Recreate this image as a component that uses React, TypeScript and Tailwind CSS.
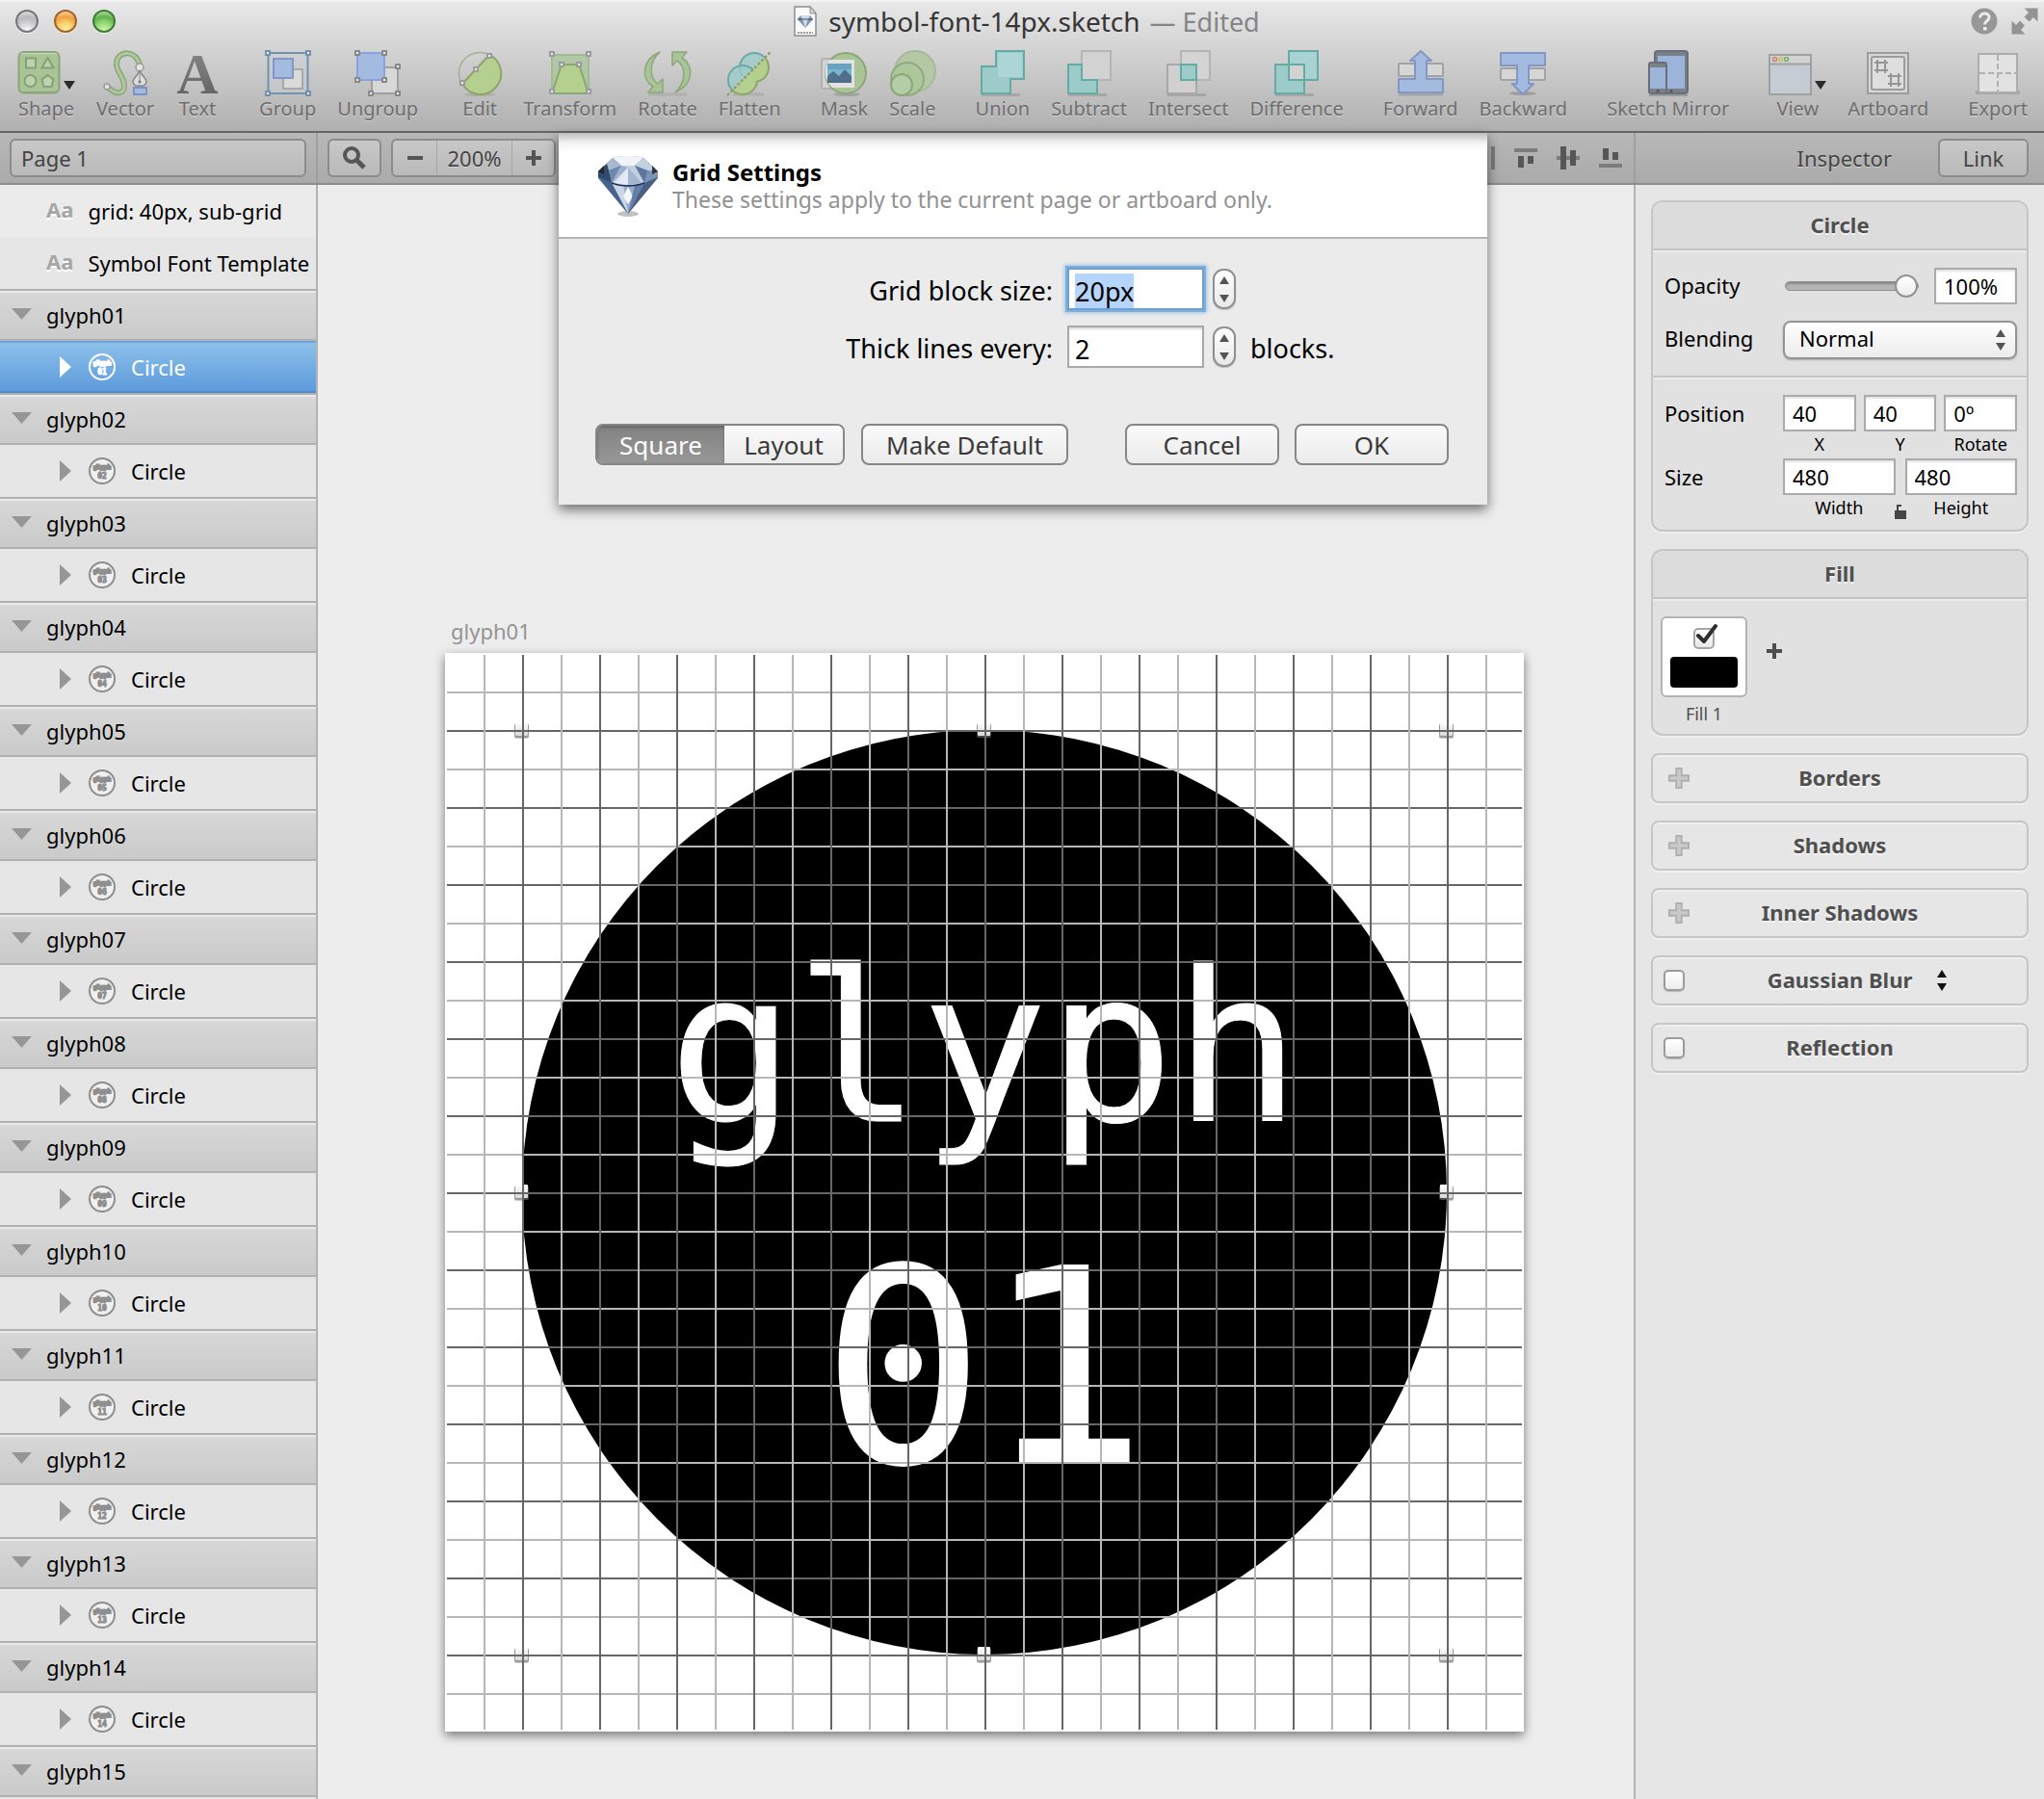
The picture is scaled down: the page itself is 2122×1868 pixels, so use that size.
import { useEffect, useRef } from "react";
import type { ReactNode } from "react";

/* ---------- toolbar icons ---------- */

const GREEN = "#a9c598";
const GREEN_LINE = "#8ba678";
const LIME = "#b5d08e";
const TEAL = "#9dcbca";
const TEAL_LINE = "#66aaa4";
const BLUE = "#a3bbdf";
const BLUE_LINE = "#8496c6";
const NODE = "#9c9ca0";

function Icon({ w, children }: { w: number; children: ReactNode }) {
  return (
    <svg width={w} height={48} viewBox={`0 0 ${w} 48`} fill="none" aria-hidden="true" className="overflow-visible">
      {children}
    </svg>
  );
}

function Nodes({ at, color = NODE }: { at: [number, number][]; color?: string }) {
  return (
    <>
      {at.map(([x, y]) => (
        <rect key={`${x}-${y}`} x={x - 2} y={y - 2} width={4} height={4} fill="#eee" stroke={color} strokeWidth={2} />
      ))}
    </>
  );
}

function Caret() {
  return (
    <svg width={12} height={48} viewBox="0 0 12 48" aria-hidden="true">
      <path d="M0 32h12l-6 9z" fill="#2b2b2b" />
    </svg>
  );
}

const ShapeIcon = (
  <Icon w={45}>
    <rect x="1" y="3" width="43" height="43" rx="6" fill="#8f9c88" opacity=".5" />
    <rect x="1.5" y="2" width="42" height="42" rx="5" fill={GREEN} stroke={GREEN_LINE} strokeWidth="2" />
    <path d="M4 3.500h37" stroke="#c9dcbd" />
    <g stroke="#86a073" strokeWidth="2" fill="#bdd2b0">
      <rect x="9" y="8.500" width="10" height="10" />
      <path d="M31.500 8l6 10.500h-12z" />
      <circle cx="13.500" cy="32" r="6" />
      <path d="M31.500 26l6 4.500-2 7.500h-8l-2-7.500z" />
    </g>
  </Icon>
);

const VectorIcon = (
  <Icon w={46}>
    <path d="M4 38c10 9 17 8 18 0 1-9-9-16-8-25C15 0 36-1 38 17" stroke="#8ba678" strokeWidth="6" />
    <path d="M4 38c10 9 17 8 18 0 1-9-9-16-8-25C15 0 36-1 38 17" stroke="#aeca9c" strokeWidth="3" />
    <circle cx="4" cy="38" r="3" fill="#e4e4e4" stroke="#999" strokeWidth="1.500" />
    <circle cx="38" cy="18" r="4" fill="#e4e4e4" stroke="#999" strokeWidth="1.500" />
    <path d="M38 21c1 5 7 8 7 12 0 2-2 3-3 4h-8c-1-1-3-2-3-4 0-4 6-7 7-12z" fill="#ddd" stroke="#878787" strokeWidth="1.500" />
    <path d="M38 24v9" stroke="#878787" />
    <circle cx="38" cy="33" r="1.500" fill="#777" />
    <rect x="32" y="39" width="13" height="7" fill={BLUE} stroke="#7d92c0" strokeWidth="2" />
  </Icon>
);

const TextIcon = (
  <Icon w={46}>
    <defs>
      <linearGradient id="ink" x1="0" y1="0" x2="0" y2="1">
        <stop offset="0" stopColor="#8c8c8c" />
        <stop offset="1" stopColor="#5c5c5c" />
      </linearGradient>
    </defs>
    <text x="23" y="45" textAnchor="middle" fill="url(#ink)" className="font-['Liberation_Serif',serif] text-[60px] font-bold">
      A
    </text>
  </Icon>
);

const GroupIcon = (
  <Icon w={48}>
    <rect x="3.500" y="3" width="41" height="42" stroke="#7491ad" strokeWidth="2" fill="#c9cfd6" fillOpacity=".4" />
    <rect x="19" y="20" width="20" height="20" fill="#dadada" stroke="#a8a8a8" strokeWidth="2" />
    <rect x="9" y="9" width="20" height="20" fill={BLUE} stroke={BLUE_LINE} strokeWidth="2" />
    <Nodes color="#7491ad" at={[[3, 3], [45, 3], [3, 45], [45, 45]]} />
  </Icon>
);

const UngroupIcon = (
  <Icon w={48}>
    <rect x="18" y="18" width="27" height="27" fill="#d8d8d8" stroke="#a0a0a0" strokeWidth="2" />
    <rect x="3" y="3" width="28" height="28" fill={BLUE} stroke="#8aa0e0" strokeWidth="2" />
    <Nodes color="#8a8a8a" at={[[3, 3], [31, 3], [3, 31], [31, 31], [45, 17], [17, 45], [45, 45]]} />
  </Icon>
);

const EditIcon = (
  <Icon w={46}>
    <ellipse cx="23" cy="46" rx="16" ry="2" fill="#999" opacity=".5" />
    <circle cx="23" cy="24" r="21.500" stroke="#a2b196" strokeWidth="1.500" />
    <path d="M5 35L33 5a21.500 21.500 0 1 1-28 30z" fill={LIME} stroke="#8ea568" strokeWidth="2" />
    <Nodes at={[[5, 34], [19, 20], [33, 6]]} />
  </Icon>
);

const TransformIcon = (
  <Icon w={44}>
    <rect x="3" y="5" width="38" height="40" fill={GREEN} fillOpacity=".8" stroke="#a3ba96" strokeWidth="2" />
    <path d="M13 15h18l10 30H3z" fill={LIME} stroke={GREEN_LINE} strokeWidth="2" />
    <Nodes at={[[3, 4], [41, 4], [13, 15], [31, 15], [3, 43], [41, 43]]} />
  </Icon>
);

const RotateIcon = (
  <Icon w={46}>
    <path d="M3 46h40" stroke="#999" strokeWidth="3" opacity=".4" />
    <g fill={GREEN} stroke={GREEN_LINE} strokeWidth="1.500" strokeLinejoin="round">
      <path d="M15 2C-4 10-5 30 8 38l-5 6h15V30l-5 5C3 28 4 12 15 2z" />
      <path d="M31 44c19-8 20-28 7-36l5-6H28v14l5-5c10 7 9 23-2 33z" />
    </g>
  </Icon>
);

const FlattenIcon = (
  <Icon w={46}>
    <defs>
      <clipPath id="upper-half">
        <path d="M0 47L45 2V0H0z" />
      </clipPath>
      <clipPath id="lower-half">
        <path d="M0 47L45 2v46H0z" />
      </clipPath>
    </defs>
    <path d="M6 46h32" stroke="#999" strokeWidth="3" opacity=".4" />
    <g clipPath="url(#upper-half)" fill={TEAL} fillOpacity=".8" stroke={TEAL_LINE} strokeWidth="2">
      <circle cx="28" cy="18" r="15" />
      <circle cx="16" cy="31" r="15" />
    </g>
    <g clipPath="url(#lower-half)">
      <g stroke="#8ea568" strokeWidth="4">
        <circle cx="28" cy="18" r="14" />
        <circle cx="16" cy="31" r="14" />
      </g>
      <g fill={LIME}>
        <circle cx="28" cy="18" r="14" />
        <circle cx="16" cy="31" r="14" />
      </g>
    </g>
    <path d="M0 47L45 2" stroke="#8b9a66" strokeWidth="2" strokeDasharray="3 2" />
  </Icon>
);

const MaskIcon = (
  <Icon w={48}>
    <ellipse cx="27" cy="46" rx="14" ry="2" fill="#888" opacity=".5" />
    <rect x="1" y="9" width="35" height="31" rx="2" stroke="#b2b2b2" strokeWidth="2" fill="#d4d4d4" />
    <circle cx="26" cy="24" r="21" fill={GREEN} stroke={GREEN_LINE} strokeWidth="2" />
    <path d="M9 10h26v29H12A21 21 0 0 1 9 10z" fill="#e2e2e2" />
    <rect x="7" y="14" width="25" height="20" fill="#6aa3c2" />
    <path d="M7 20h25v8H7z" fill="#83bad2" opacity=".7" />
    <path d="M7 34v-7l6-5 6 5 6-7 7 7v7z" fill="#4f6f8a" />
  </Icon>
);

const ScaleIcon = (
  <Icon w={48}>
    <circle cx="27" cy="22" r="21" fill="#b4c8a6" stroke="#a5b898" strokeWidth="2" />
    <circle cx="19" cy="30" r="17" fill="#adc79d" stroke="#92aa82" strokeWidth="2" />
    <circle cx="13" cy="36" r="11" fill="#b5cda6" stroke={GREEN_LINE} strokeWidth="2" />
  </Icon>
);

const SquareShadow = <path d="M1 46.500h40" stroke="#888" strokeWidth="3" opacity=".45" />;

const UnionIcon = (
  <Icon w={46}>
    {SquareShadow}
    <path d="M16 1h29v29H31v15H1V17h15z" fill={TEAL} stroke={TEAL_LINE} strokeWidth="2" />
    <path d="M18 3h25v25H18z" fill="#add5d5" />
  </Icon>
);

const SubtractIcon = (
  <Icon w={46}>
    {SquareShadow}
    <rect x="15" y="1" width="30" height="30" fill="#d2d2d2" stroke="#b4b4b4" strokeWidth="2" />
    <path d="M1 15h14v16h16v14H1z" fill={TEAL} stroke={TEAL_LINE} strokeWidth="2" />
  </Icon>
);

const IntersectIcon = (
  <Icon w={46}>
    {SquareShadow}
    <rect x="15" y="1" width="30" height="30" fill="#d4d4d4" stroke="#b4b4b4" strokeWidth="2" />
    <rect x="1" y="15" width="30" height="30" fill="#d0d0d0" stroke="#a8a8a8" strokeWidth="2" />
    <rect x="15" y="15" width="16" height="16" fill={TEAL} stroke={TEAL_LINE} strokeWidth="2" />
  </Icon>
);

const DifferenceIcon = (
  <Icon w={46}>
    {SquareShadow}
    <rect x="15" y="1" width="30" height="30" fill="#a9d3d3" stroke={TEAL_LINE} strokeWidth="2" />
    <rect x="1" y="15" width="30" height="30" fill={TEAL} stroke={TEAL_LINE} strokeWidth="2" />
    <rect x="15" y="15" width="16" height="16" fill="#d2d2d2" stroke={TEAL_LINE} strokeWidth="2" />
  </Icon>
);

const ForwardIcon = (
  <Icon w={48}>
    <path d="M1 46h46" stroke="#888" strokeWidth="3" opacity=".5" />
    <rect x="1" y="14" width="46" height="13" rx="1" fill="#d6d6d6" stroke="#a2a2a2" strokeWidth="2" />
    <path d="M24 1l11 10h-5v19h17v14H1V30h17V11h-5z" fill={BLUE} stroke={BLUE_LINE} strokeWidth="2" strokeLinejoin="round" />
  </Icon>
);

const BackwardIcon = (
  <Icon w={48}>
    <ellipse cx="24" cy="45" rx="14" ry="2" fill="#888" opacity=".6" />
    <rect x="1" y="19" width="46" height="12" rx="1" fill="#d6d6d6" stroke="#a2a2a2" strokeWidth="2" />
    <path d="M1 3h46v13H30v19h5L24 46 13 35h5V16H1z" fill={BLUE} stroke={BLUE_LINE} strokeWidth="2" strokeLinejoin="round" />
  </Icon>
);

const MirrorIcon = (
  <Icon w={42}>
    <path d="M1 47h40" stroke="#777" strokeWidth="2" opacity=".5" />
    <rect x="7" y="1" width="34" height="44" rx="3" fill="#7b7f88" stroke="#6a6e76" strokeWidth="2" />
    <rect x="10" y="6" width="28" height="34" fill="#9db4da" />
    <rect x="1" y="13" width="18" height="32" rx="2" fill="#7b7f88" stroke="#6a6e76" strokeWidth="2" />
    <rect x="2" y="18" width="16" height="22" fill="#9db4da" />
    <circle cx="10" cy="42.500" r="1.500" fill="#50545c" />
    <circle cx="24" cy="42.500" r="1.500" fill="#50545c" />
  </Icon>
);

const ViewIcon = (
  <Icon w={45}>
    <rect x="1" y="5" width="43" height="41" fill="#c4ccd4" stroke="#a0a0a0" strokeWidth="2" />
    <path d="M2 6h41v8H2z" fill="#d2d2d2" />
    <path d="M2 14.500h41" stroke="#a0a0a0" strokeWidth="2" />
    <circle cx="6.500" cy="9.500" r="2" stroke="#cf7f86" strokeWidth="1.500" />
    <circle cx="12.500" cy="9.500" r="2" stroke="#d3bd5f" strokeWidth="1.500" />
    <circle cx="18.500" cy="9.500" r="2" stroke="#6fb566" strokeWidth="1.500" />
  </Icon>
);

const ArtboardIcon = (
  <Icon w={44}>
    <rect x="1" y="3" width="42" height="42" fill="#d6d6d6" stroke="#9c9c9c" strokeWidth="2" />
    <rect x="5" y="7" width="34" height="34" rx="2" fill="#dedede" stroke="#9c9c9c" strokeWidth="2" />
    <path
      d="M11 10v14M19 10v14M8 13h14M8 21h14M25 24v14M33 24v14M22 27h14M22 35h14"
      stroke="#969696"
      strokeWidth="2"
    />
  </Icon>
);

const ExportIcon = (
  <Icon w={46}>
    <path d="M0 42h2v3h42v-3h2v4H0z" fill="#a6a6a6" />
    <rect x="3" y="4" width="40" height="40" fill="#e2e2e2" stroke="#adadad" strokeWidth="2" />
    <path d="M23 5v38M4 24h38" stroke="#b0b0b0" strokeWidth="2" strokeDasharray="6 3" />
  </Icon>
);

type Tool = { label: string; icon: ReactNode; menu?: boolean };

const toolGroups: Tool[][] = [
  [
    { label: "Shape", icon: ShapeIcon, menu: true },
    { label: "Vector", icon: VectorIcon },
    { label: "Text", icon: TextIcon },
  ],
  [
    { label: "Group", icon: GroupIcon },
    { label: "Ungroup", icon: UngroupIcon },
  ],
  [
    { label: "Edit", icon: EditIcon },
    { label: "Transform", icon: TransformIcon },
    { label: "Rotate", icon: RotateIcon },
    { label: "Flatten", icon: FlattenIcon },
  ],
  [
    { label: "Mask", icon: MaskIcon },
    { label: "Scale", icon: ScaleIcon },
  ],
  [
    { label: "Union", icon: UnionIcon },
    { label: "Subtract", icon: SubtractIcon },
    { label: "Intersect", icon: IntersectIcon },
    { label: "Difference", icon: DifferenceIcon },
  ],
  [
    { label: "Forward", icon: ForwardIcon },
    { label: "Backward", icon: BackwardIcon },
  ],
  [{ label: "Sketch Mirror", icon: MirrorIcon }],
  [
    { label: "View", icon: ViewIcon, menu: true },
    { label: "Artboard", icon: ArtboardIcon },
  ],
  [{ label: "Export", icon: ExportIcon }],
];

function TitleBar() {
  return (
    <div className="grid h-11 grid-cols-[1fr_auto_1fr] items-center pr-1.5 pl-4">
      <div className="flex gap-4">
        <button
          aria-label="Close"
          className="size-6 rounded-full border-2 border-[#77777a] bg-[radial-gradient(circle_at_50%_100%,#ffffff_0%,#c9c9cb_45%,#b9b9bb_65%,#ededed_100%)] shadow-[0_1px_0_#f4f4f4]"
        />
        <button
          aria-label="Minimize"
          className="size-6 rounded-full border-2 border-[#a5622a] bg-[radial-gradient(circle_at_50%_100%,#fdf3a4_0%,#f8cf6a_40%,#efa03f_65%,#fbe3c0_100%)] shadow-[0_1px_0_#f4f4f4]"
        />
        <button
          aria-label="Zoom"
          className="size-6 rounded-full border-2 border-[#3f7a35] bg-[radial-gradient(circle_at_50%_100%,#d8f6b0_0%,#93d877_40%,#5fb14c_65%,#d3efca_100%)] shadow-[0_1px_0_#f4f4f4]"
        />
      </div>
      <h1 className="flex items-center gap-3 leading-none">
        <svg width={24} height={32} viewBox="0 0 24 32" aria-hidden="true">
          <path d="M1 1h16l6 7v23H1z" fill="#fafafa" stroke="#8d8d8d" strokeWidth="1.500" />
          <path d="M17 1v7h6z" fill="#d8d8d8" stroke="#8d8d8d" />
          <path d="M7 10h10l3 4-8 9-8-9z" fill="#7d93ae" />
          <path d="M7 10l2 4h6l2-4zM9 14l3 9 3-9z" fill="#cfdbe8" />
          <path d="M4 14h16" stroke="#34506e" />
          <path d="M4 28h16" stroke="#999" strokeWidth="2" strokeDasharray="2 1" />
        </svg>
        <span className="text-[28px] text-[#363636]">symbol-font-14px.sketch</span>
        <span className="-ml-0.5 text-[27px] text-[#858585]">— Edited</span>
      </h1>
      <div className="flex items-center justify-end gap-3.5">
        <button aria-label="Help">
          <svg width={28} height={28} viewBox="0 0 28 28" fill="none" aria-hidden="true">
            <circle cx="14" cy="14" r="13.500" fill="#979797" />
            <path d="M9.500 10.500c0-6 9.500-6 9.500-.5 0 4-4.500 3.500-4.500 7.500" stroke="#ececec" strokeWidth="3" />
            <rect x="13" y="20" width="3.500" height="3.500" fill="#ececec" />
          </svg>
        </button>
        <button aria-label="Enter full screen">
          <svg width={28} height={28} viewBox="0 0 28 28" fill="#939393" aria-hidden="true">
            <path d="M13.500 0.500H27.500V14.500L23 10l-4.500 4.500-5-5L18 5z" />
            <path d="M14.500 27.500H0.500V13.500L5 18l4-4.500 5 5L10 23z" />
          </svg>
        </button>
      </div>
    </div>
  );
}

function Toolbar() {
  return (
    <div className="flex justify-between pt-2 pr-[17px] pl-[18px]">
      {toolGroups.map((group, g) => (
        <div key={g} className="flex gap-[22px]">
          {group.map((tool) => (
            <button key={tool.label} className="flex min-w-[46px] flex-col items-center">
              <span className="flex gap-[3px]">
                {tool.icon}
                {tool.menu && <Caret />}
              </span>
              <span className="text-[20px] leading-[26px] text-[#6e6e6e] [text-shadow:0_1px_0_#d4d4d4]">{tool.label}</span>
            </button>
          ))}
        </div>
      ))}
    </div>
  );
}

/* ---------- bar under the toolbar ---------- */

function SubBar() {
  return (
    <div className="flex h-[54px] border-b-2 border-[#8d8d8d] bg-linear-to-b from-[#b8b8b8] to-[#aaaaaa] text-[22px] text-[#444] [text-shadow:0_1px_0_#d2d2d2]">
      <div className="flex w-[330px] items-center border-r-2 border-[#9f9f9f] pr-2.5 pl-2.5">
        <select
          aria-label="Page"
          defaultValue="Page 1"
          className="h-10 w-full appearance-none rounded-md border-2 border-[#8c8c8c] bg-linear-to-b from-[#c8c8c8] to-[#b9b9b9] px-2.5"
        >
          <option>Page 1</option>
        </select>
      </div>
      <div className="flex min-w-0 flex-1 items-center justify-between pr-3 pl-2.5">
        <div className="flex gap-2.5">
          <button
            aria-label="Search"
            className="grid h-10 w-14 place-items-center rounded-md border-2 border-[#8c8c8c] bg-linear-to-b from-[#c8c8c8] to-[#b9b9b9]"
          >
            <svg width={26} height={26} viewBox="0 0 26 26" fill="none" stroke="#565656" aria-hidden="true">
              <circle cx="10" cy="10" r="7" strokeWidth="4" />
              <path d="M15 15l8 8" strokeWidth="5" />
            </svg>
          </button>
          <div className="flex h-10 w-[171px] items-stretch rounded-md border-2 border-[#8c8c8c] bg-linear-to-b from-[#c8c8c8] to-[#b9b9b9]">
            <button aria-label="Zoom out" className="grid w-[46px] place-items-center border-r border-[#a6a6a6]">
              <span className="h-1 w-4 bg-[#555]" />
            </button>
            <output className="flex-1 text-center leading-9">200%</output>
            <button aria-label="Zoom in" className="grid w-11 place-items-center border-l border-[#a6a6a6]">
              <svg width={16} height={16} viewBox="0 0 16 16" aria-hidden="true">
                <path d="M6 0h4v6h6v4h-6v6H6v-6H0V6h6z" fill="#555" />
              </svg>
            </button>
          </div>
        </div>
        <div className="flex items-center gap-5">
          <button aria-label="Align right">
            <svg width={24} height={24} viewBox="0 0 24 24" aria-hidden="true">
              <path d="M20 0h4v24h-4z" fill="#7c7c7c" />
            </svg>
          </button>
          <button aria-label="Align top">
            <svg width={24} height={24} viewBox="0 0 24 24" aria-hidden="true">
              <path d="M0 2h24v4H0z" fill="#7c7c7c" />
              <path d="M4 10h6v12H4zM14 10h6v8h-6z" fill="#565656" />
            </svg>
          </button>
          <button aria-label="Align middle">
            <svg width={24} height={24} viewBox="0 0 24 24" aria-hidden="true">
              <path d="M0 10h24v4H0z" fill="#7c7c7c" />
              <path d="M4 0h6v24H4zM14 4h6v16h-6z" fill="#565656" />
            </svg>
          </button>
          <button aria-label="Align bottom">
            <svg width={24} height={24} viewBox="0 0 24 24" aria-hidden="true">
              <path d="M0 18h24v4H0z" fill="#7c7c7c" />
              <path d="M4 2h6v12H4zM14 6h6v8h-6z" fill="#565656" />
            </svg>
          </button>
        </div>
      </div>
      <div className="flex w-[426px] items-center justify-end gap-12 border-l-2 border-[#9f9f9f] pr-4">
        <span>Inspector</span>
        <button className="h-10 w-[94px] rounded-md border-2 border-[#8c8c8c] bg-linear-to-b from-[#c8c8c8] to-[#b9b9b9]">
          Link
        </button>
      </div>
    </div>
  );
}

/* ---------- layer list ---------- */

const glyphs = ["01", "02", "03", "04", "05", "06", "07", "08", "09", "10", "11", "12", "13", "14", "15"];

function LayerBadge({ number, selected }: { number: string; selected: boolean }) {
  const ink = selected ? "#ffffff" : "#8e8e8e";
  return (
    <svg width={28} height={28} viewBox="0 0 28 28" aria-hidden="true">
      <circle cx="14" cy="14" r="13" fill={selected ? "none" : "#f0f0f0"} stroke={ink} strokeWidth="2" />
      <g fill={ink} stroke={ink} textAnchor="middle" className="font-['DejaVu_Sans_Mono',monospace] font-bold">
        <text x="14" y="12" strokeWidth="2" className="text-[6px]">
          glyph
        </text>
        <text x="14" y="22" strokeWidth="1" className="text-[8px]">
          {number}
        </text>
      </g>
    </svg>
  );
}

function Sidebar() {
  return (
    <nav aria-label="Layers" className="w-[330px] shrink-0 overflow-hidden border-r-2 border-[#b3b3b3] bg-[#e6e6e6] text-[22px]">
      {["grid: 40px, sub-grid", "Symbol Font Template"].map((name, i) => (
        <button
          key={name}
          className={`flex h-[54px] w-full items-center gap-[15px] pl-12 text-left whitespace-nowrap ${i === 0 ? "bg-[#ebebeb]" : ""}`}
        >
          <span aria-hidden="true" className="pb-1 text-[22px] font-bold text-[#a6a6a6] [text-shadow:0_2px_0_#fff]">
            Aa
          </span>
          {name}
        </button>
      ))}
      {glyphs.map((n, i) => {
        const selected = i === 0;
        return (
          <div key={n}>
            <button className="flex h-[54px] w-full items-center gap-[15px] border-y-2 border-[#b0b0b0] bg-linear-to-b from-[#d8d8d8] to-[#cacaca] pl-3 text-left shadow-[inset_0_2px_0_#eaeaea]">
              <svg width={21} height={14} viewBox="0 0 21 14" aria-hidden="true">
                <path d="M0 0h21L10.500 12z" fill="#969696" />
              </svg>
              glyph{n}
            </button>
            {n !== "15" && (
              <button
                className={`flex h-[54px] w-full items-center pl-[62px] text-left ${
                  selected
                    ? "border-t-2 border-b-2 border-t-[#6ba7dc] border-b-[#4f8acb] bg-linear-to-b from-[#8cc1ea] to-[#5d9adb] text-white"
                    : ""
                }`}
              >
                <svg width={12} height={22} viewBox="0 0 12 22" aria-hidden="true">
                  <path d="M0 0v22l12-11z" fill={selected ? "#fff" : "#969696"} />
                </svg>
                <span className="mr-4 ml-[18px]">
                  <LayerBadge number={n} selected={selected} />
                </span>
                Circle
              </button>
            )}
          </div>
        );
      })}
    </nav>
  );
}

/* ---------- canvas ---------- */

const lines = Array.from({ length: 27 }, (_, i) => i + 1);
const lineColor = (k: number) => (k % 2 === 0 ? "#666666" : "#b7b7b7");
const handles: [number, number][] = [
  [80, 80], [560, 80], [1040, 80],
  [80, 560], [1040, 560],
  [80, 1040], [560, 1040], [1040, 1040],
];

function Canvas() {
  return (
    <main className="min-w-0 flex-1 overflow-hidden bg-[#ededed] pt-[448px] pl-[132px]">
      <p className="h-[38px] pl-1.5 text-[22px] leading-[30px] text-[#939393]">glyph01</p>
      <svg
        width={1120}
        height={1120}
        viewBox="0 0 1120 1120"
        role="img"
        aria-label="Artboard glyph01"
        className="bg-white shadow-[0_4px_10px_rgba(0,0,0,0.5)]"
      >
        <defs>
          <linearGradient id="handle" x1="0" y1="0" x2="0" y2="1">
            <stop offset="0" stopColor="#ffffff" />
            <stop offset="1" stopColor="#d8d8d8" />
          </linearGradient>
        </defs>
        <circle cx="560" cy="560" r="480" fill="#000" />
        <g fill="#fff" stroke="#fff" textAnchor="middle" className="font-['DejaVu_Sans_Mono',monospace]">
          <text x="560" y="486" strokeWidth="1" className="text-[218px]">
            glyph
          </text>
          <text x="560" y="840" strokeWidth="2" className="text-[280px]">
            01
          </text>
        </g>
        {handles.map(([x, y]) => (
          <g key={`${x}-${y}`}>
            <rect x={x - 8} y={y - 6} width="15" height="15" rx="2" fill="#000" opacity=".2" />
            <rect x={x - 8} y={y - 7} width="15" height="15" rx="2" fill="#777" opacity=".6" />
            <rect x={x - 7} y={y - 8} width="13" height="14" rx="1" fill="url(#handle)" />
          </g>
        ))}
        {lines.map((k) => (
          <rect key={k} x="2" y={k * 40} width="1116" height="2" fill={lineColor(k)} />
        ))}
        {lines.map((k) => (
          <rect key={k} x={k * 40} y="2" width="2" height="1116" fill={lineColor(k)} />
        ))}
      </svg>
    </main>
  );
}

/* ---------- grid settings sheet ---------- */

function Diamond() {
  return (
    <svg width={64} height={64} viewBox="0 0 64 64" aria-hidden="true">
      <ellipse cx="32" cy="60" rx="11" ry="3" fill="#777" opacity=".45" />
      <path d="M16 2C26-1 38-1 48 2l15 14v7L32 60 1 23v-7z" fill="#6b86ab" />
      <path d="M16 2C26-1 38-1 48 2l-9 8H25z" fill="#f0f4f9" />
      <path d="M16 2l9 8-13 5-11 2z" fill="#a9bacf" />
      <path d="M48 2l-9 8 13 5 11 2z" fill="#c3d0e0" />
      <path d="M1 16l9-8 2 7 3 13L1 22z" fill="#304a6d" />
      <path d="M1 16l6-6v9z" fill="#22272f" />
      <path d="M63 16l-11-1-3 13 14-6z" fill="#7c93b3" />
      <path d="M63 16l-6-6v9z" fill="#2c3440" />
      <path d="M12 15l13-5-10 18z" fill="#6d89b0" />
      <path d="M52 15l-13-5 10 18z" fill="#5c789f" />
      <path d="M25 10h14l10 18c-10 3-24 3-34 0z" fill="#c2cfe0" />
      <path d="M25 10l7 2-17 16z" fill="#9db1cb" />
      <path d="M32 12L18 28l14 2z" fill="#e3eaf3" />
      <path d="M32 12l14 16-14 2z" fill="#a3b6cf" />
      <path d="M15 28c10 4 24 4 34 0L32 60z" fill="#9aaecb" />
      <path d="M15 28l12 2 5 30z" fill="#cbd7e6" />
      <path d="M32 32l-5 10 5 8 5-8z" fill="#f4f8fc" />
      <path d="M49 28l-10 2-7 30z" fill="#6580a8" />
      <path d="M49 28l14-6-31 38z" fill="#4a5f82" />
      <path d="M1 22l14 6 17 32z" fill="#46638f" />
      <path d="M15 28c10 4 24 4 34 0" stroke="#1d2f55" strokeWidth="1.500" fill="none" />
    </svg>
  );
}

function Stepper({ label }: { label: string }) {
  return (
    <span className="flex h-[42px] w-6 flex-col overflow-hidden rounded-[11px] border-2 border-[#8f8f8f] bg-linear-to-b from-white to-[#e9e9e9] shadow-[0_1px_1px_rgba(0,0,0,0.2)]">
      <button aria-label={`Increase ${label}`} className="grid flex-1 place-items-center">
        <svg width={10} height={8} viewBox="0 0 10 8" aria-hidden="true">
          <path d="M0 8h10L5 0z" fill="#555" />
        </svg>
      </button>
      <button aria-label={`Decrease ${label}`} className="grid flex-1 place-items-center">
        <svg width={10} height={8} viewBox="0 0 10 8" aria-hidden="true">
          <path d="M0 0h10L5 8z" fill="#555" />
        </svg>
      </button>
    </span>
  );
}

const sheetButton =
  "h-[43px] rounded-lg border-2 border-[#868686] bg-linear-to-b from-[#fafafa] to-[#ebebeb] text-[26px] leading-none text-[#3a3a3a]";

function GridSheet() {
  const size = useRef<HTMLInputElement>(null);
  useEffect(() => {
    size.current?.focus();
    size.current?.select();
  }, []);

  return (
    <div className="pointer-events-none absolute inset-x-0 top-0 flex justify-center">
      <section
        role="dialog"
        aria-labelledby="sheet-title"
        className="pointer-events-auto ml-0.5 w-[964px] bg-[#ebebeb] shadow-[0_5px_12px_rgba(0,0,0,0.55)]"
      >
        <header className="flex h-[110px] gap-3.5 border-b-2 border-[#b3b3b3] bg-[linear-gradient(to_bottom,#bdbdbd_0px,#f2f2f2_10px,#ffffff_20px)] pt-6 pl-10">
          <Diamond />
          <div className="pt-0.5">
            <h2 id="sheet-title" className="text-[24px] leading-[30px] font-bold">
              Grid Settings
            </h2>
            <p className="text-[23px] leading-[26px] text-[#919191]">
              These settings apply to the current page or artboard only.
            </p>
          </div>
        </header>
        <form className="px-[38px] pt-[30px] pb-[41px]" onSubmit={(e) => e.preventDefault()}>
          <div className="grid grid-cols-[475px_142px_24px_1fr] items-center gap-y-4 text-[27px]">
            <label htmlFor="block-size" className="pt-1 text-right leading-10">
              Grid block size:
            </label>
            <input
              id="block-size"
              ref={size}
              defaultValue="20px"
              className="ml-[15px] h-11 w-[142px] border-2 border-[#6d9fcf] bg-white px-1.5 pt-1 text-[27px] leading-8 shadow-[0_0_0_2px_#7fb0dc,0_0_4px_3px_#9cc3e6] outline-none selection:bg-[#b5d5fd] selection:text-black"
            />
            <span className="ml-6">
              <Stepper label="grid block size" />
            </span>
            <span />
            <label htmlFor="thick-lines" className="pt-1 text-right leading-10">
              Thick lines every:
            </label>
            <input
              id="thick-lines"
              defaultValue="2"
              className="ml-[15px] h-11 w-[142px] border-2 border-[#a9a9a9] bg-white px-1.5 pt-1 text-[27px] leading-8 shadow-[inset_0_2px_2px_#dcdcdc] outline-none"
            />
            <span className="ml-6">
              <Stepper label="thick lines" />
            </span>
            <span className="pt-1 pl-[39px] leading-10">blocks.</span>
          </div>
          <div className="mt-[58px] flex pr-0.5">
            <div className="flex h-[43px] w-[259px] overflow-hidden rounded-lg border-2 border-[#868686] text-[26px] leading-none">
              <button className="w-[132px] bg-linear-to-b from-[#828282] to-[#979797] text-white shadow-[inset_0_2px_3px_#666]">
                Square
              </button>
              <button className="flex-1 bg-linear-to-b from-[#fafafa] to-[#ebebeb] text-[#3a3a3a]">Layout</button>
            </div>
            <button className={`${sheetButton} ml-[17px] w-[215px]`}>Make Default</button>
            <button className={`${sheetButton} ml-auto w-40`}>Cancel</button>
            <button className={`${sheetButton} ml-4 w-40`}>OK</button>
          </div>
        </form>
      </section>
    </div>
  );
}

/* ---------- inspector ---------- */

const field = "h-[38px] w-full border-2 border-[#ababab] bg-white px-2 text-[22px] shadow-[inset_0_2px_2px_#e2e2e2] outline-none";

function Field({ id, label, value }: { id: string; label: string; value: string }) {
  return (
    <div className="flex flex-1 flex-col">
      <input id={id} defaultValue={value} className={field} />
      <label htmlFor={id} className="text-center text-[18px] leading-[26px]">
        {label}
      </label>
    </div>
  );
}

function PanelTitle({ children }: { children: ReactNode }) {
  return (
    <h2 className="h-[50px] rounded-t-[10px] border-b-2 border-[#c3c3c3] bg-[#dcdcdc] text-center text-[22px] leading-[46px] font-bold text-[#4f4f4f] [text-shadow:0_2px_0_#f0f0f0]">
      {children}
    </h2>
  );
}

function CirclePanel() {
  return (
    <section className="rounded-xl border-2 border-[#c6c6c6] bg-[#e1e1e1] text-[22px] shadow-[0_2px_0_#efefef]">
      <PanelTitle>Circle</PanelTitle>
      <div className="flex flex-col gap-[17px] border-b-2 border-[#c6c6c6] pt-[18px] pr-2.5 pb-[17px] pl-3 shadow-[inset_0_2px_0_#ebebeb,0_2px_0_#ebebeb]">
        <div className="flex items-center">
          <label htmlFor="opacity" className="w-[125px] pb-0.5">
            Opacity
          </label>
          <input
            id="opacity"
            type="range"
            defaultValue={100}
            className="h-2.5 min-w-0 flex-1 appearance-none rounded-full border border-[#8e8e8e] bg-[#b5b5b5] shadow-[inset_0_2px_2px_#8a8a8a] [&::-webkit-slider-thumb]:size-6 [&::-webkit-slider-thumb]:appearance-none [&::-webkit-slider-thumb]:rounded-full [&::-webkit-slider-thumb]:border-2 [&::-webkit-slider-thumb]:border-[#929292] [&::-webkit-slider-thumb]:bg-linear-to-b [&::-webkit-slider-thumb]:from-white [&::-webkit-slider-thumb]:to-[#ececec]"
          />
          <input aria-label="Opacity value" defaultValue="100%" className={`${field} ml-4 max-w-[86px]`} />
        </div>
        <div className="flex items-center">
          <label htmlFor="blending" className="w-[123px] pb-1">
            Blending
          </label>
          <span className="relative flex-1">
            <select
              id="blending"
              defaultValue="Normal"
              className="block h-10 w-full appearance-none rounded-lg border-2 border-[#949494] bg-linear-to-b from-white to-[#ececec] px-[15px] pb-1 shadow-[0_1px_2px_rgba(0,0,0,0.25)]"
            >
              <option>Normal</option>
            </select>
            <svg width={10} height={22} viewBox="0 0 10 22" aria-hidden="true" className="pointer-events-none absolute top-[9px] right-3">
              <path d="M0 8h10L5 0zM0 14h10l-5 8z" fill="#555" />
            </svg>
          </span>
        </div>
      </div>
      <div className="flex flex-col gap-0.5 pt-[18px] pr-2.5 pb-2.5 pl-3">
        <div className="flex">
          <span className="w-[123px] shrink-0 leading-[38px]">Position</span>
          <div className="flex gap-2">
            <Field id="pos-x" label="X" value="40" />
            <Field id="pos-y" label="Y" value="40" />
            <Field id="rotate" label="Rotate" value="0º" />
          </div>
        </div>
        <div className="flex">
          <span className="w-[123px] shrink-0 leading-[38px]">Size</span>
          <div className="flex">
            <Field id="width" label="Width" value="480" />
            <button aria-label="Lock proportions" className="flex w-2.5 items-end justify-center">
              <svg width={12} height={26} viewBox="0 0 12 26" aria-hidden="true" className="shrink-0">
                <path d="M0 16h12v9H0z" fill="#444" />
                <path d="M3 16v-5h4" stroke="#444" strokeWidth="2" fill="none" />
              </svg>
            </button>
            <Field id="height" label="Height" value="480" />
          </div>
        </div>
      </div>
    </section>
  );
}

function FillPanel() {
  return (
    <section className="rounded-xl border-2 border-[#c6c6c6] bg-[#e1e1e1] shadow-[0_2px_0_#efefef]">
      <PanelTitle>Fill</PanelTitle>
      <div className="flex items-start gap-5 px-2 pt-[18px] pb-[9px] shadow-[inset_0_2px_0_#ebebeb]">
        <div className="flex w-[90px] flex-col items-center">
          <div className="flex h-[84px] w-full flex-col items-center gap-2 rounded-md border-2 border-[#b4b4b4] bg-white pt-2.5">
            <span className="relative flex">
              <input
                id="fill-1"
                type="checkbox"
                defaultChecked
                className="peer size-[22px] appearance-none rounded-[5px] border-2 border-[#a5a5a5] bg-linear-to-b from-white to-[#e8e8e8]"
              />
              <svg
                width={24}
                height={26}
                viewBox="0 0 24 26"
                aria-hidden="true"
                className="pointer-events-none absolute -top-1.5 left-0.5 hidden peer-checked:block"
              >
                <path d="M3 14l6 6L21 4" fill="none" stroke="#2e2e2e" strokeWidth="4" strokeLinecap="round" strokeLinejoin="round" />
              </svg>
            </span>
            <button aria-label="Fill color" className="h-8 w-[70px] rounded-sm bg-black" />
          </div>
          <label htmlFor="fill-1" className="pt-[5px] text-[18px] leading-6 text-[#4f4f4f]">
            Fill 1
          </label>
        </div>
        <button aria-label="Add fill" className="mt-7">
          <svg width={16} height={16} viewBox="0 0 16 16" aria-hidden="true">
            <path d="M6 0h4v6h6v4h-6v6H6v-6H0V6h6z" fill="#4d4d4d" />
          </svg>
        </button>
      </div>
    </section>
  );
}

function CollapsedPanel({ title, kind, menu }: { title: string; kind: "add" | "check"; menu?: boolean }) {
  const id = `toggle-${title.toLowerCase().replace(" ", "-")}`;
  return (
    <section className="relative flex h-[52px] items-center justify-center rounded-lg border-2 border-[#c6c6c6] bg-[#e6e6e6] shadow-[0_2px_0_#efefef,inset_0_2px_0_#efefef]">
      {kind === "add" ? (
        <button aria-label={`Add ${title}`} className="absolute left-4">
          <svg width={22} height={22} viewBox="0 0 24 24" aria-hidden="true">
            <path d="M9 1h6v8h8v6h-8v8H9v-8H1V9h8z" fill="#c9c9c9" stroke="#aeaeae" strokeWidth="2" />
          </svg>
        </button>
      ) : (
        <input
          id={id}
          type="checkbox"
          className="absolute left-[11px] size-[22px] appearance-none rounded-[5px] border-2 border-[#9b9b9b] bg-linear-to-b from-white to-[#ededed] shadow-[0_1px_1px_rgba(0,0,0,0.2)]"
        />
      )}
      <h2 className="pb-0.5 text-[22px] leading-[46px] font-bold text-[#4f4f4f] [text-shadow:0_2px_0_#f4f4f4]">
        {kind === "check" ? <label htmlFor={id}>{title}</label> : title}
      </h2>
      {menu && (
        <button aria-label={`${title} type`} className="absolute right-[83px]">
          <svg width={10} height={22} viewBox="0 0 10 22" aria-hidden="true">
            <path d="M0 8h10L5 0zM0 14h10l-5 8z" fill="#111" />
          </svg>
        </button>
      )}
    </section>
  );
}

function Inspector() {
  return (
    <aside
      aria-label="Inspector"
      className="flex w-[426px] shrink-0 flex-col gap-[18px] overflow-hidden border-l-2 border-[#b3b3b3] bg-[#e6e6e6] p-4"
    >
      <CirclePanel />
      <FillPanel />
      <CollapsedPanel title="Borders" kind="add" />
      <CollapsedPanel title="Shadows" kind="add" />
      <CollapsedPanel title="Inner Shadows" kind="add" />
      <CollapsedPanel title="Gaussian Blur" kind="check" menu />
      <CollapsedPanel title="Reflection" kind="check" />
    </aside>
  );
}

export default function App() {
  return (
    <div className="flex h-screen flex-col overflow-hidden bg-[#ededed] font-['Noto_Sans','Open_Sans',sans-serif] text-black">
      <header className="h-[138px] shrink-0 border-b-2 border-[#666] bg-linear-to-b from-[#e9e9e9] to-[#b0b0b0] shadow-[inset_0_2px_0_#f3f3f3]">
        <TitleBar />
        <Toolbar />
      </header>
      <div className="relative flex min-h-0 flex-1 flex-col">
        <SubBar />
        <div className="flex min-h-0 flex-1">
          <Sidebar />
          <Canvas />
          <Inspector />
        </div>
        <GridSheet />
      </div>
    </div>
  );
}
